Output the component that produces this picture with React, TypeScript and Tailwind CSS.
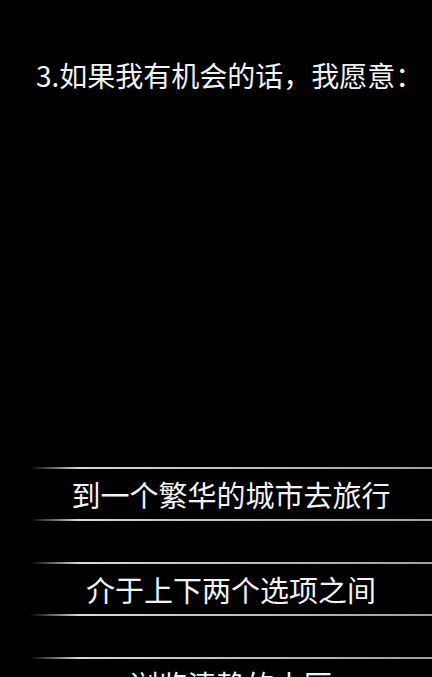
import React from "react";

const font = { fontFamily: '"Noto Sans CJK SC", "Noto Sans", sans-serif' };

function Line() {
  return (
    <div className="h-[2px] w-full bg-gradient-to-r from-transparent via-[#d8d8d8] via-[12%] to-[#a0a0a0]" />
  );
}

function Option({ text }: { text: string }) {
  return (
    <div className="flex flex-col">
      <Line />
      <div className="h-[50px] flex items-center justify-center text-[29px] text-[#f2f2f2] leading-none">
        {text}
      </div>
      <Line />
    </div>
  );
}

export default function App() {
  return (
    <div className="w-full h-[677px] bg-black overflow-hidden" style={font}>
      <div className="pt-[57px] pl-[36px] text-[28px] leading-[36px] text-[#f2f2f2] whitespace-nowrap">
        3.如果我有机会的话，我愿意：
      </div>
      <div className="mt-[374px] ml-[30px] flex flex-col gap-[41px]">
        <Option text="到一个繁华的城市去旅行" />
        <Option text="介于上下两个选项之间" />
        <Option text="浏览清静的山区" />
      </div>
    </div>
  );
}
